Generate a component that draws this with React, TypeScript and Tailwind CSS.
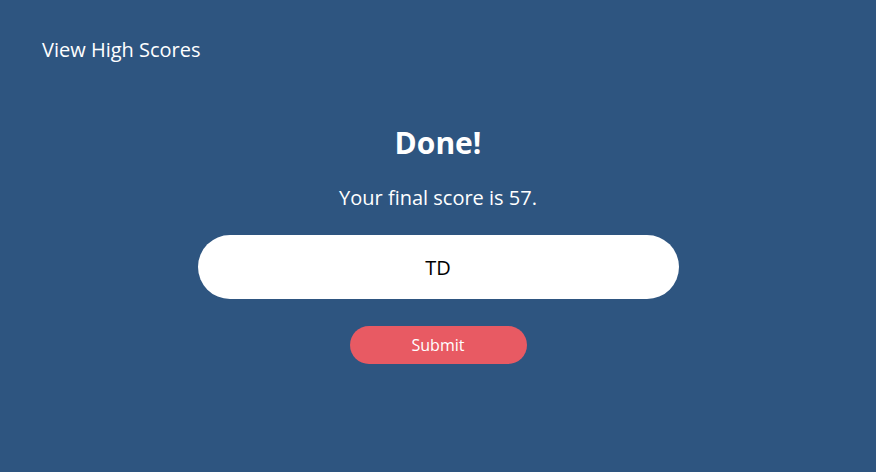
export default function App() {
  return (
    <div className="min-h-[472px] w-full bg-[#2e5580] text-white [font-family:'Trebuchet_MS','Open_Sans',sans-serif]">
      <header className="px-[42px] pt-[37px]">
        <a className="text-[20px] leading-[26px] font-medium">View High Scores</a>
      </header>
      <main className="flex flex-col items-center pt-[60px]">
        <h1 className="text-[30px] leading-[40px] font-bold">Done!</h1>
        <p className="mt-[22px] text-[20px] leading-[26px] font-medium">Your final score is 57.</p>
        <input
          defaultValue="TD"
          className="mt-[24px] h-[64px] w-[481px] rounded-full bg-white text-center text-[20px] text-black outline-none"
        />
        <button
          type="button"
          className="mt-[27px] h-[38px] w-[177px] rounded-full bg-[#e85a63] text-[16px] text-white"
        >
          Submit
        </button>
      </main>
    </div>
  );
}
